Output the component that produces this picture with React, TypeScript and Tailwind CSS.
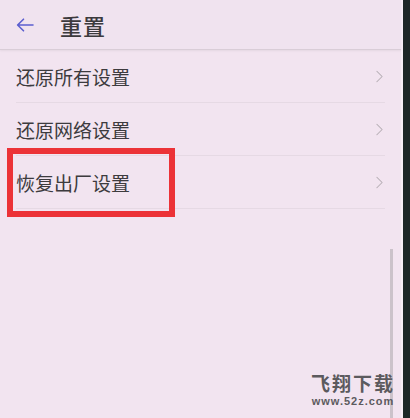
import { ChevronRight } from 'lucide-react';

const rows = ['还原所有设置', '还原网络设置', '恢复出厂设置'];

export default function App() {
  return (
    <div
      className="relative flex h-[418px] w-[410px] overflow-hidden bg-[#f2e4f0]"
      style={{ fontFamily: '"Noto Sans CJK SC", "Noto Sans", sans-serif' }}
    >
      <div className="relative flex flex-1 flex-col">
        {/* Header */}
        <div className="flex h-[50px] items-center border-b border-[#d9cdd7] bg-[#f0e3ef] pl-[16px] shadow-[0_1px_2px_rgba(0,0,0,0.06)]">
          <svg width="18" height="14" viewBox="0 0 18 14" fill="none" className="mt-[1px]">
            <path d="M17 7H2M7.5 1.2L1.6 7l5.9 5.8" stroke="#5b5fcf" strokeWidth="1.6" strokeLinecap="round" strokeLinejoin="round" />
          </svg>
          <span className="ml-[26px] text-[22px] font-medium leading-none tracking-[1px] text-[#3c3a3d]">重置</span>
        </div>

        {/* List */}
        <div className="flex flex-col px-[16px]">
          {rows.map((label) => (
            <div key={label} className="flex h-[53px] items-center justify-between border-b border-[#e6d9e4]">
              <span className="text-[19px] leading-none text-[#3d3b3e]">{label}</span>
              <ChevronRight size={21} strokeWidth={1.2} className="mr-[-5px] text-[#b5adb4]" />
            </div>
          ))}
        </div>

        {/* Red highlight */}
        <div className="absolute left-[7px] top-[148px] h-[69px] w-[168px] border-[6px] border-[#ec3237]" />

        {/* Scrollbar */}
        <div className="absolute bottom-0 left-[390px] top-[249px] w-[3px] bg-[#cbc2ca]" />

        {/* Watermark */}
        <div className="absolute bottom-[11px] right-[6px] flex flex-col items-center gap-[4px] text-[#5c5a5e]">
          <span className="text-[19px] font-bold leading-[19px] tracking-[2px]">飞翔下载</span>
          <span
            className="text-[11px] font-bold leading-[11px] tracking-[1px]"
            style={{ fontFamily: '"Liberation Sans", Arial, sans-serif' }}
          >
            www.52z.com
          </span>
        </div>
      </div>
      <div className="w-[2px] bg-[#f7eef6]" />
      <div className="w-[7px] bg-[#1d2727]" />
    </div>
  );
}
